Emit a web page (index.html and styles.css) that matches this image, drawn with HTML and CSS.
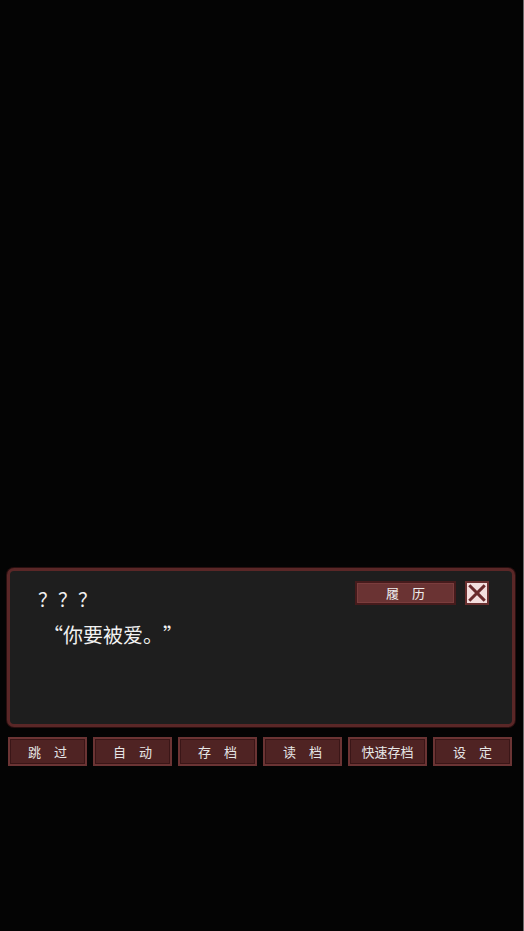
FILE: index.html
```html
<!DOCTYPE html>
<html lang="zh-CN">
<head>
<meta charset="utf-8">
<title>ADV</title>
<link rel="stylesheet" href="styles.css">
</head>
<body>
<div class="screen">
  <div class="stage"></div>
  <div class="dialog">
    <div class="dialog-head">
      <div class="speaker">？？？</div>
      <div class="head-tools">
        <button class="log-btn">履　历</button>
        <button class="close-btn" aria-label="关闭">
          <svg viewBox="0 0 24 24" width="20" height="20">
            <path d="M4 4 L20 20 M20 4 L4 20" stroke="#6a2a2c" stroke-width="3.6" stroke-linecap="square" fill="none"/>
          </svg>
        </button>
      </div>
    </div>
    <div class="line">“你要被爱。”</div>
  </div>
  <div class="menu">
    <button class="menu-btn">跳　过</button>
    <button class="menu-btn">自　动</button>
    <button class="menu-btn">存　档</button>
    <button class="menu-btn">读　档</button>
    <button class="menu-btn">快速存档</button>
    <button class="menu-btn">设　定</button>
  </div>
</div>
</body>
</html>
```

FILE: styles.css
```css
html, body {
  margin: 0;
  padding: 0;
  background: #000;
}
body {
  font-family: "Noto Sans CJK SC", "Noto Sans", sans-serif;
  color: #eee;
}
.screen {
  width: 523px;
  height: 931px;
  border-right: 1px solid #6a6a6a;
  background: #040404;
  display: flex;
  flex-direction: column;
}
.stage {
  height: 568px;
  flex: none;
}
.dialog {
  margin: 0 8px 0 7px;
  height: 159px;
  box-sizing: border-box;
  border: 3px solid #5a2727;
  border-radius: 7px;
  background: #1e1e1e;
  box-shadow: 0 0 0 1px #2a0f10;
  padding: 10px 23px 0 28px;
}
.dialog-head {
  display: flex;
  justify-content: space-between;
  align-items: flex-start;
}
.speaker {
  margin-top: 6px;
  font-size: 19px;
  line-height: 24px;
  letter-spacing: 1px;
  color: #f2f2f2;
}
.head-tools {
  display: flex;
  gap: 9px;
}
.log-btn {
  width: 101px;
  height: 24px;
  box-sizing: border-box;
  border: 2px solid #461b1c;
  background: #6a3333;
  box-shadow: inset 0 0 0 1px #7a3d3d;
  color: #eee;
  font-family: inherit;
  font-size: 13px;
  line-height: 18px;
  padding: 0;
}
.close-btn {
  width: 24px;
  height: 24px;
  box-sizing: border-box;
  border: 2px solid #6a3030;
  background: #f3dede;
  padding: 0;
  display: flex;
  align-items: center;
  justify-content: center;
}
.close-btn svg {
  display: block;
}
.line {
  margin: 11px 0 0 5px;
  font-size: 20px;
  line-height: 26px;
  color: #f2f2f2;
  text-spacing-trim: space-all;
}
.menu {
  margin: 10px 0 0 8px;
  display: flex;
  gap: 6px;
}
.menu-btn {
  width: 79px;
  height: 29px;
  box-sizing: border-box;
  border: 2px solid #6b3434;
  background: #4f2323;
  box-shadow: inset 0 0 0 1px #3a1617;
  color: #e6e6e6;
  font-family: inherit;
  font-size: 13px;
  line-height: 20px;
  padding: 0;
}
```
